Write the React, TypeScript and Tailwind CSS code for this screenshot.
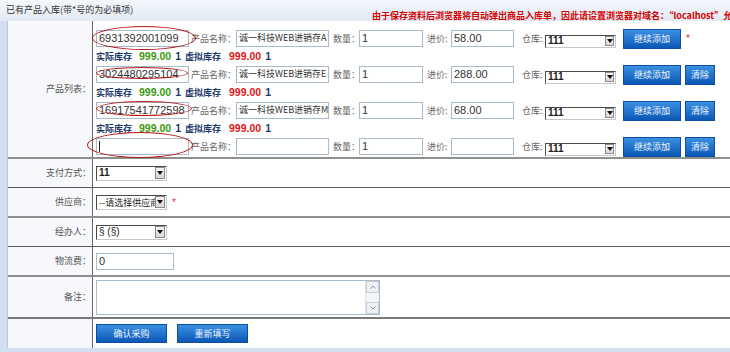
import React from "react";

const cjk = "font-['Noto_Sans_CJK_SC',sans-serif]";
const num = "font-['Liberation_Sans',sans-serif]";

type Product = {
  code: string;
  name: string;
  price: string;
  stock: boolean;
  clear: boolean;
  ring: string;
};

const products: Product[] = [
  {
    code: "6931392001099",
    name: "诚一科技WEB进销存A",
    price: "58.00",
    stock: true,
    clear: false,
    ring: "left-[-4px] top-[-4px] w-[104px] h-[24px]",
  },
  {
    code: "3024480295104",
    name: "诚一科技WEB进销存E",
    price: "288.00",
    stock: true,
    clear: true,
    ring: "left-[0px] top-[1px] w-[92px] h-[12px]",
  },
  {
    code: "16917541772598",
    name: "诚一科技WEB进销存M",
    price: "68.00",
    stock: true,
    clear: true,
    ring: "left-[0px] top-[-1px] w-[96px] h-[15px]",
  },
  {
    code: "",
    name: "",
    price: "",
    stock: false,
    clear: true,
    ring: "left-[-9px] top-[-6px] w-[106px] h-[26px]",
  },
];

function Arrow({ className }: { className: string }) {
  return (
    <div
      className={`flex items-center justify-center border border-[#8a8a8a] bg-gradient-to-b from-[#f4f4f4] to-[#d8d8d8] ${className}`}
    >
      <svg width="6" height="4" viewBox="0 0 6 4">
        <path d="M0 0h6L3 4z" fill="#111" />
      </svg>
    </div>
  );
}

function Select({
  text,
  className,
  arrow,
  textClass,
}: {
  text: string;
  className: string;
  arrow: string;
  textClass: string;
}) {
  return (
    <div
      className={`flex shrink-0 items-center overflow-hidden border border-t-[#4a4a4a] border-l-[#4a4a4a] border-r-[#c8c8c8] border-b-[#c8c8c8] bg-white ${className}`}
    >
      <span className={`flex-1 overflow-hidden whitespace-nowrap pl-[2px] leading-none text-[#222] ${textClass}`}>
        {text}
      </span>
      <Arrow className={`mr-[1px] shrink-0 ${arrow}`} />
    </div>
  );
}

function Input({ className, children }: { className: string; children?: React.ReactNode }) {
  return (
    <div
      className={`flex h-[17px] shrink-0 items-center overflow-hidden whitespace-nowrap border border-[#a9bacd] bg-white pl-[2px] text-[#333] ${className}`}
    >
      {children}
    </div>
  );
}

function Btn({ className, children }: { className: string; children: React.ReactNode }) {
  return (
    <div
      className={`flex shrink-0 items-center justify-center border border-[#0b4f9e] bg-gradient-to-b from-[#3a90e2] to-[#0a58b6] text-[9px] leading-none text-[#eef4ff] ${cjk} ${className}`}
    >
      {children}
    </div>
  );
}

function Label({ children }: { children: React.ReactNode }) {
  return (
    <div
      className={`flex w-[85px] shrink-0 items-center justify-end border-r border-[#666] bg-[#f6f8fb] pr-[1px] text-[9px] text-[#555] ${cjk}`}
    >
      {children}
    </div>
  );
}

function Tag({ className, children }: { className: string; children: React.ReactNode }) {
  return (
    <span className={`shrink-0 whitespace-nowrap text-[9px] leading-none text-[#666] ${cjk} ${className}`}>
      {children}
    </span>
  );
}

function ProductLine({ p }: { p: Product }) {
  return (
    <div>
      <div className="flex h-[21px] items-center">
        <div className="relative">
          <Input className={`w-[93px] text-[11px] ${num}`}>
            {p.code || <span className="h-[11px] w-px bg-[#222]" />}
          </Input>
          <div className={`absolute rounded-[50%] border border-[#b41818] ${p.ring}`} />
        </div>
        <Tag className="ml-[2px] w-[45px]">产品名称：</Tag>
        <Input className={`w-[93px] items-start pt-[2px] text-[9px] leading-none ${cjk}`}>{p.name}</Input>
        <Tag className="ml-[4px] w-[26px]">数量：</Tag>
        <Input className={`w-[64px] text-[11px] ${num}`}>1</Input>
        <Tag className="ml-[4px] w-[24px]">进价:</Tag>
        <Input className={`w-[63px] text-[11px] ${num}`}>{p.price}</Input>
        <Tag className="ml-[8px] w-[23px]">仓库:</Tag>
        <Select
          text="111"
          className="mt-[5px] h-[13px] w-[71px]"
          arrow="h-[10px] w-[9px]"
          textClass={`text-[10px] font-bold ${num}`}
        />
        <Btn className="ml-[7px] h-[20px] w-[58px]">继续添加</Btn>
        {p.clear ? (
          <Btn className="ml-[4px] h-[20px] w-[30px]">清除</Btn>
        ) : (
          <span className={`ml-[5px] text-[10px] text-[#e03030] ${num}`}>*</span>
        )}
      </div>
      {p.stock && (
        <div className={`flex h-[15px] items-center text-[9px] font-bold leading-none text-[#1c3a6e] ${cjk}`}>
          <span>实际库存</span>
          <span className={`ml-[7px] text-[10.5px] text-[#3a9a0c] ${num}`}>999.00</span>
          <span className={`ml-[4px] text-[10.5px] ${num}`}>1</span>
          <span className="ml-[4px]">虚拟库存</span>
          <span className={`ml-[8px] text-[10.5px] text-[#e01414] ${num}`}>999.00</span>
          <span className={`ml-[4px] text-[10.5px] ${num}`}>1</span>
        </div>
      )}
    </div>
  );
}

export default function App() {
  return (
    <div className="h-[352px] w-[730px] overflow-hidden bg-[#d3dfef]">
      <div className="flex h-[21px] bg-gradient-to-b from-[#f5f8fc] to-[#e2e9f3]">
        <div className={`w-[372px] shrink-0 pl-[6px] pt-[5px] text-[9px] leading-none text-[#333] ${cjk}`}>
          已有产品入库(带*号的为必填项)
        </div>
        <div className={`min-w-0 flex-1 overflow-hidden whitespace-nowrap pt-[11px] text-[9px] font-bold leading-none text-[#d40000] ${cjk}`}>
          由于保存资料后浏览器将自动弹出商品入库单，因此请设置浏览器对域名：“localhost”允
        </div>
      </div>

      <div className="ml-[7px] flex flex-col border-l border-[#b9c9dd] bg-white">
        <div className="flex h-[138px] border-b-2 border-[#8f8f8f]">
          <Label>产品列表：</Label>
          <div className="flex-1 pl-[3px] pt-[7px]">
            {products.map((p, i) => (
              <ProductLine key={i} p={p} />
            ))}
          </div>
        </div>

        <div className="flex h-[29px] border-b border-[#5c5c5c]">
          <Label>支付方式：</Label>
          <div className="flex flex-1 items-center pl-[3px]">
            <Select
              text="11"
              className="h-[15px] w-[71px]"
              arrow="h-[12px] w-[10px]"
              textClass={`text-[10px] font-bold ${num}`}
            />
          </div>
        </div>

        <div className="flex h-[30px] border-b-2 border-[#8f8f8f]">
          <Label>供应商：</Label>
          <div className="flex flex-1 items-center pl-[3px]">
            <Select
              text="--请选择供应商"
              className="h-[15px] w-[71px]"
              arrow="h-[12px] w-[10px]"
              textClass={`text-[9px] ${cjk}`}
            />
            <span className={`ml-[5px] text-[10px] text-[#e03030] ${num}`}>*</span>
          </div>
        </div>

        <div className="flex h-[29px] border-b border-[#5c5c5c]">
          <Label>经办人：</Label>
          <div className="flex flex-1 items-center pl-[3px]">
            <Select
              text="§ (§)"
              className="h-[15px] w-[71px]"
              arrow="h-[12px] w-[10px]"
              textClass={`text-[10px] ${num}`}
            />
          </div>
        </div>

        <div className="flex h-[30px] border-b-2 border-[#8f8f8f]">
          <Label>物流费：</Label>
          <div className="flex flex-1 items-center pl-[3px]">
            <Input className={`w-[78px] text-[11px] ${num}`}>0</Input>
          </div>
        </div>

        <div className="flex h-[42px] border-b-2 border-[#7a7a7a]">
          <Label>备注：</Label>
          <div className="flex flex-1 items-center pl-[3px]">
            <div className="flex h-[35px] w-[284px] justify-end border border-[#a9bacd] bg-white">
              <div className="flex w-[14px] flex-col justify-between border-l border-[#dde3ea] bg-[#f3f5f8]">
                <div className="flex h-[12px] items-center justify-center border border-[#c5cdd8] bg-[#eef1f5]">
                  <svg width="6" height="4" viewBox="0 0 6 4">
                    <path d="M0.5 3.5L3 1l2.5 2.5" fill="none" stroke="#8a96a6" />
                  </svg>
                </div>
                <div className="flex h-[12px] items-center justify-center border border-[#c5cdd8] bg-[#eef1f5]">
                  <svg width="6" height="4" viewBox="0 0 6 4">
                    <path d="M0.5 0.5L3 3l2.5-2.5" fill="none" stroke="#8a96a6" />
                  </svg>
                </div>
              </div>
            </div>
          </div>
        </div>

        <div className="flex h-[29px]">
          <Label>{""}</Label>
          <div className="flex flex-1 items-center gap-[10px] pl-[3px]">
            <Btn className="h-[19px] w-[71px]">确认采购</Btn>
            <Btn className="h-[19px] w-[71px]">重新填写</Btn>
          </div>
        </div>
      </div>
    </div>
  );
}
